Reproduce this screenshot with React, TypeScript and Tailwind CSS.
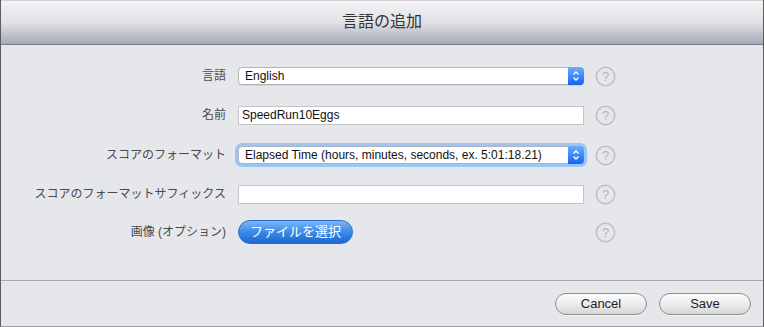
import React from 'react';

const font = { fontFamily: '"Liberation Sans", "Noto Sans CJK JP", sans-serif' };

const HelpIcon = () => (
	<svg width="21" height="21" viewBox="0 0 21 21" className="shrink-0">
		<circle cx="10.5" cy="10.5" r="9.2" fill="none" stroke="#bfc0c3" strokeWidth="1.6" />
		<text
			x="10.5"
			y="15.2"
			textAnchor="middle"
			fontSize="13"
			fill="#b3b4b7"
			fontFamily='"Liberation Sans", sans-serif'
		>
			?
		</text>
	</svg>
);

const Stepper = () => (
	<div className="flex w-[16px] h-[18px] -my-px -mr-px items-center justify-center rounded-r-[4px] bg-gradient-to-b from-[#6aaefc] to-[#1462f2]">
		<svg width="8" height="12" viewBox="0 0 8 12">
			<path d="M1.5 4.5 L4 2 L6.5 4.5" fill="none" stroke="#fff" strokeWidth="1.4" />
			<path d="M1.5 7.5 L4 10 L6.5 7.5" fill="none" stroke="#fff" strokeWidth="1.4" />
		</svg>
	</div>
);

const Select = ({ value, focused }: { value: string; focused?: boolean }) => (
	<div
		className={`flex items-center w-[346px] h-[18px] bg-white border border-[#b4b4b6] rounded-[4px] shadow-[0_1px_0_rgba(0,0,0,0.08)] ${
			focused ? 'ring-[3px] ring-[#9cc4f5]' : ''
		}`}
	>
		<span className="flex-1 pl-[6px] text-[12px] text-[#111] leading-none">{value}</span>
		<Stepper />
	</div>
);

const Input = ({ value }: { value?: string }) => (
	<div className="flex items-center w-[346px] h-[19px] bg-white border border-[#c4c4c6] pl-[3px] text-[12px] text-[#111] leading-none">
		{value}
	</div>
);

const Row = ({ label, children }: { label: string; children: React.ReactNode }) => (
	<div className="flex items-center h-[18px]">
		<div className="w-[225px] text-right text-[12px] text-[#4a4a4a] leading-none">{label}</div>
		<div className="ml-[12px]">{children}</div>
		<div className="ml-[11px]">
			<HelpIcon />
		</div>
	</div>
);

const PillButton = ({ label }: { label: string }) => (
	<button className="w-[92px] h-[22px] rounded-full border border-[#8d8d8f] bg-gradient-to-b from-[#fdfdfd] via-[#ececec] to-[#d6d6d8] text-[13px] text-[#1e1e1e] shadow-[0_1px_0_rgba(255,255,255,0.6)]">
		{label}
	</button>
);

export default function App() {
	return (
		<div
			className="w-[764px] h-[327px] flex flex-col bg-[#e6e7eb] border-x border-[#5c5c5e] border-b border-b-[#a0a0a4] overflow-hidden"
			style={font}
		>
			<header className="h-[45px] shrink-0 flex items-center justify-center border-t border-t-[#d0d0d4] border-b border-b-[#727a8c] bg-gradient-to-b from-[#f3f3f5] via-[#e1e2e6] to-[#a7a9b5]">
				<h1 className="text-[16px] text-[#333] pb-[1px]">言語の追加</h1>
			</header>

			<main className="flex-1 flex flex-col pt-[22px] border-b border-[#a9a9ab]">
				<Row label="言語">
					<Select value="English" />
				</Row>
				<div className="mt-[21px]">
					<Row label="名前">
						<Input value="SpeedRun10Eggs" />
					</Row>
				</div>
				<div className="mt-[22px]">
					<Row label="スコアのフォーマット">
						<Select value="Elapsed Time (hours, minutes, seconds, ex. 5:01:18.21)" focused />
					</Row>
				</div>
				<div className="mt-[21px]">
					<Row label="スコアのフォーマットサフィックス">
						<Input />
					</Row>
				</div>
				<div className="mt-[17px] flex items-center h-[24px]">
					<div className="w-[225px] text-right text-[12px] text-[#4a4a4a] leading-none">画像 (オプション)</div>
					<button className="ml-[12px] w-[115px] h-[24px] rounded-full border border-[#2c6cc4] bg-gradient-to-b from-[#7ab8f4] via-[#3d8ae6] to-[#1b68d2] text-[13px] text-white">
						ファイルを選択
					</button>
					<div className="ml-[242px]">
						<HelpIcon />
					</div>
				</div>
			</main>

			<footer className="h-[45px] shrink-0 flex items-center justify-end gap-[12px] pr-[12px] pt-[1px]">
				<PillButton label="Cancel" />
				<PillButton label="Save" />
			</footer>
		</div>
	);
}
